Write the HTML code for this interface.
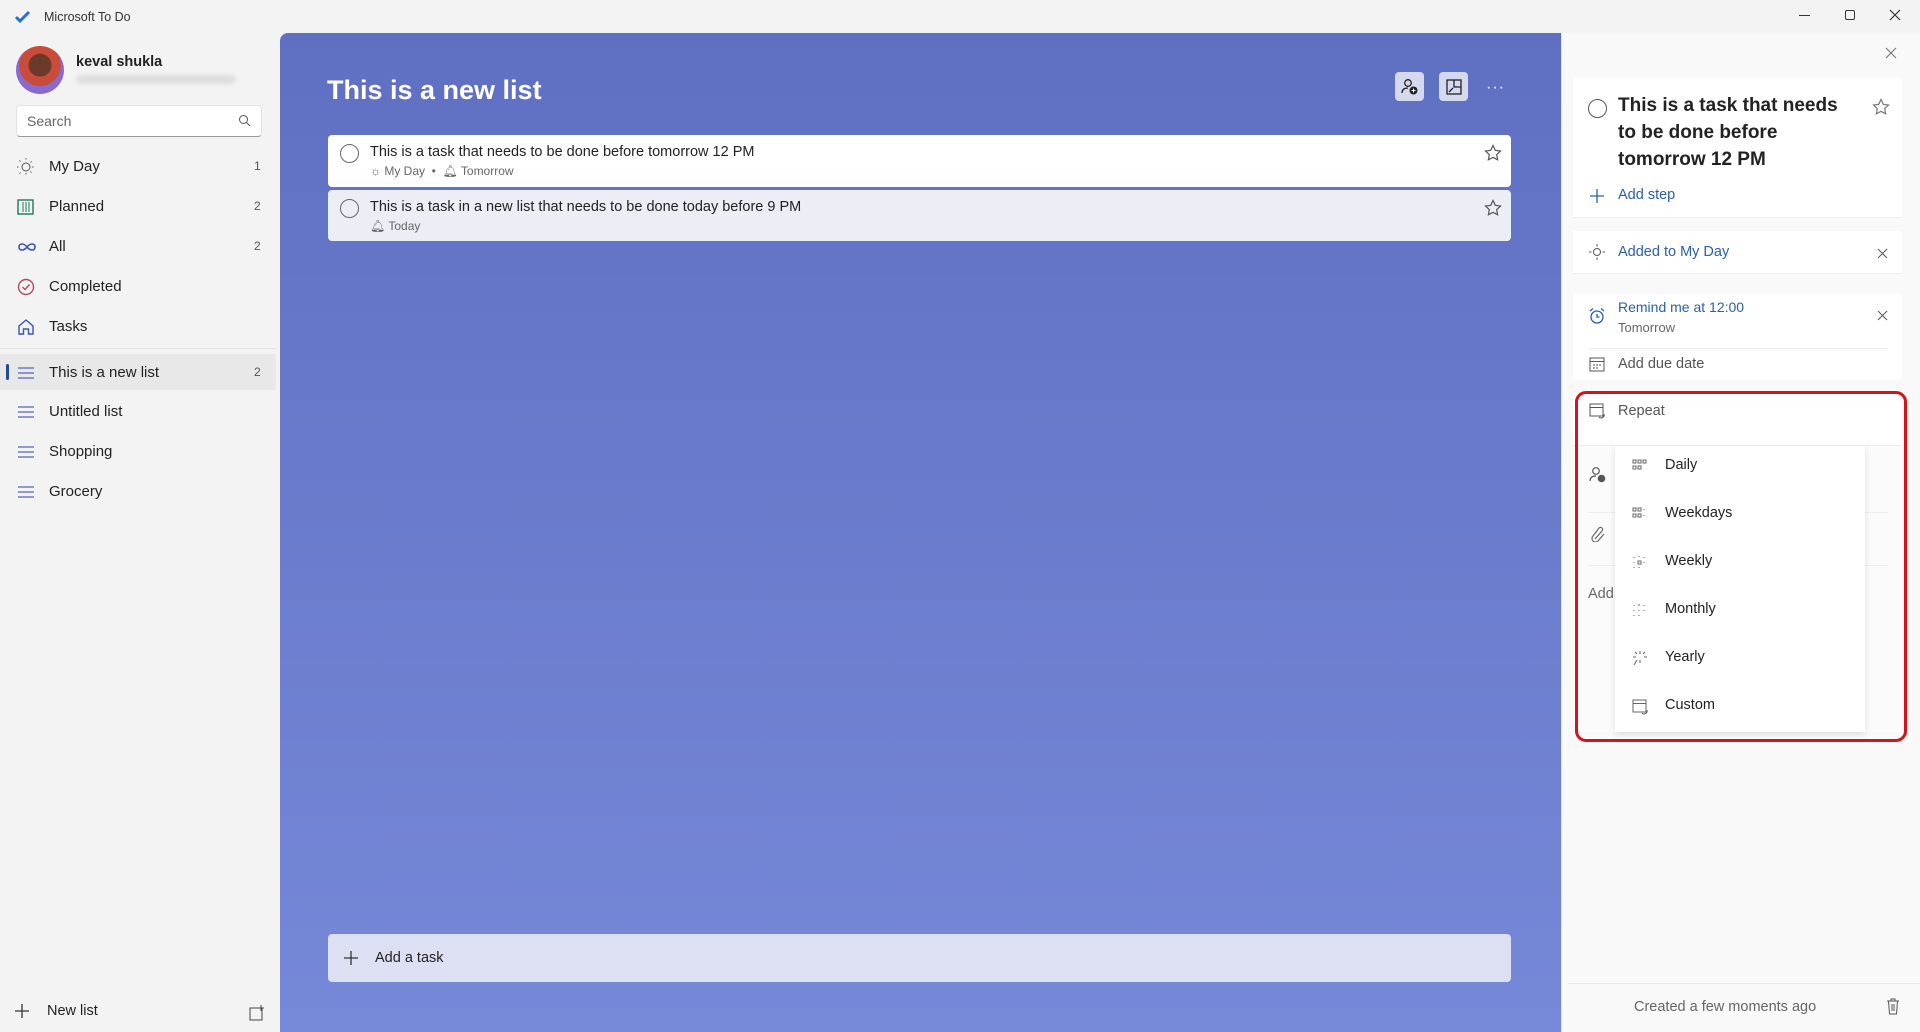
<!DOCTYPE html>
<html><head><meta charset="utf-8"><style>
*{box-sizing:border-box;margin:0;padding:0}
body{width:1920px;height:1032px;overflow:hidden;font-family:"Liberation Sans",sans-serif;background:#f3f3f3;position:relative;color:#222}
.abs{position:absolute}
.nav{position:absolute;left:0;width:276px;height:38px;font-size:15px;color:#222}
.nav .t{position:absolute;left:49px;top:10px}
.nav .c{position:absolute;left:254px;top:11px;font-size:12px;color:#555}
.nav svg{position:absolute;left:16px;top:9px}
.task{position:absolute;left:328px;width:1183px;border-radius:4px}
.task .circ{position:absolute;left:12px;width:19px;height:19px;border:1.6px solid #666;border-radius:50%}
.task .tt{position:absolute;left:42px;font-size:14.5px;color:#222}
.task .st{position:absolute;left:42px;font-size:12px;color:#666}
.rp{position:absolute;font-size:14.5px}
.mi{position:absolute;left:1665px;font-size:14.5px;color:#222}
.mic{position:absolute;left:1632px}
</style></head><body>
<svg class="abs" style="left:15px;top:10px" width="16" height="14" viewBox="0 0 16 14"><path d="M1 7l4 4 9-9" stroke="#2d6fd1" stroke-width="3" fill="none"/></svg>
<div class="abs" style="left:44px;top:10px;font-size:12.5px;color:#333">Microsoft To Do</div>
<div class="abs" style="left:1799px;top:15px;width:11px;height:1px;background:#333"></div>
<div class="abs" style="left:1845px;top:10px;width:10px;height:10px;border:1px solid #333;border-radius:2px"></div>
<svg class="abs" style="left:1889px;top:9px" width="12" height="12"><path d="M1 1l10 10M11 1L1 11" stroke="#333" stroke-width="1.2"/></svg>

<div class="abs" style="left:16px;top:46px;width:48px;height:48px;border-radius:50%;background:radial-gradient(circle at 50% 40%,#6b3a2a 0 30%,#c94b3a 31% 55%,#8a6ad0 56%)"></div>
<div class="abs" style="left:76px;top:54px;font-size:14.5px;font-weight:bold;color:#222">keval shukla</div>
<div class="abs" style="left:76px;top:75px;width:160px;height:9px;background:#ddd;border-radius:5px;filter:blur(2px)"></div>
<div class="abs" style="left:16px;top:105px;width:246px;height:32px;background:#fff;border:1px solid #e3e3e3;border-bottom:1px solid #999;border-radius:4px"></div>
<div class="abs" style="left:27px;top:113px;font-size:14px;color:#666">Search</div>
<svg class="abs" style="left:238px;top:114px" width="13" height="13"><circle cx="5.5" cy="5.5" r="4" stroke="#555" fill="none"/><path d="M8.5 8.5l3.5 3.5" stroke="#555"/></svg>

<div class="nav" style="top:148px"><svg width="20" height="20"><circle cx="10" cy="10" r="4" stroke="#555" fill="none"/><path d="M10 1v3M10 16v3M1 10h3M16 10h3M3.5 3.5l2 2M14.5 14.5l2 2M3.5 16.5l2-2M14.5 5.5l2-2" stroke="#555" stroke-dasharray="1.5 1.5"/></svg><span class="t">My Day</span><span class="c">1</span></div>
<div class="nav" style="top:188px"><svg width="20" height="20"><rect x="2" y="3" width="15" height="14" stroke="#1e7a5a" fill="none" stroke-width="1.4"/><path d="M7 5v10M10 5v10M13 5v10" stroke="#1e7a5a"/></svg><span class="t">Planned</span><span class="c">2</span></div>
<div class="nav" style="top:228px"><svg width="22" height="20"><path d="M11 10c-3-4-8-4-8 0s5 4 8 0 8-4 8 0-5 4-8 0" stroke="#3a54b8" fill="none" stroke-width="1.6"/></svg><span class="t">All</span><span class="c">2</span></div>
<div class="nav" style="top:268px"><svg width="20" height="20"><circle cx="10" cy="10" r="7.5" stroke="#b04a62" fill="none" stroke-width="1.4"/><path d="M6.5 10l2.5 2.5 4.5-5" stroke="#b04a62" fill="none" stroke-width="1.4"/></svg><span class="t">Completed</span></div>
<div class="nav" style="top:308px"><svg width="20" height="20"><path d="M3 9l7-6 7 6v8h-4.5v-5h-5v5H3z" stroke="#3a54b8" fill="none" stroke-width="1.4"/></svg><span class="t">Tasks</span></div>
<div class="abs" style="left:0;top:348px;width:276px;height:1px;background:#e3e3e3"></div>
<div class="nav" style="top:354px;background:#e8e8e8;height:36px"><div class="abs" style="left:6px;top:10px;width:3px;height:16px;border-radius:2px;background:#1d4d8f"></div><svg width="20" height="20"><path d="M2 5h16M2 10h16M2 15h16" stroke="#5566b8" stroke-width="1.3"/></svg><span class="t">This is a new list</span><span class="c">2</span></div>
<div class="nav" style="top:393px"><svg width="20" height="20"><path d="M2 5h16M2 10h16M2 15h16" stroke="#5566b8" stroke-width="1.3"/></svg><span class="t">Untitled list</span></div>
<div class="nav" style="top:433px"><svg width="20" height="20"><path d="M2 5h16M2 10h16M2 15h16" stroke="#5566b8" stroke-width="1.3"/></svg><span class="t">Shopping</span></div>
<div class="nav" style="top:473px"><svg width="20" height="20"><path d="M2 5h16M2 10h16M2 15h16" stroke="#5566b8" stroke-width="1.3"/></svg><span class="t">Grocery</span></div>
<svg class="abs" style="left:14px;top:1003px" width="16" height="16"><path d="M8 1v14M1 8h14" stroke="#333" stroke-width="1.3"/></svg>
<div class="abs" style="left:47px;top:1003px;font-size:14.5px">New list</div>
<svg class="abs" style="left:249px;top:1004px" width="17" height="17"><rect x="1" y="4" width="12" height="12" stroke="#444" fill="none"/><path d="M12 1v6M9 4h6" stroke="#444"/></svg>

<div class="abs" style="left:280px;top:33px;width:1281px;height:999px;border-radius:8px 0 0 0;background:linear-gradient(#5f6fc2,#7688d8)"></div>
<div class="abs" style="left:327px;top:75px;font-size:27px;font-weight:bold;color:#fff">This is a new list</div>
<div class="abs" style="left:1395px;top:72px;width:29px;height:29px;border-radius:4px;background:#d4d9f0"></div>
<svg class="abs" style="left:1401px;top:78px" width="18" height="18"><circle cx="7" cy="5" r="3.3" stroke="#222" fill="none" stroke-width="1.3"/><path d="M1 15c0-4 3-5 6-5" stroke="#222" fill="none" stroke-width="1.3"/><circle cx="12.5" cy="12.5" r="4" fill="#222"/><path d="M12.5 10.5v4M10.5 12.5h4" stroke="#fff"/></svg>
<div class="abs" style="left:1439px;top:72px;width:29px;height:29px;border-radius:4px;background:#d4d9f0"></div>
<svg class="abs" style="left:1446px;top:79px" width="16" height="16"><rect x="1" y="1" width="14" height="14" stroke="#222" fill="none" stroke-width="1.3"/><path d="M8 1v7h7M3 13l4-4" stroke="#222" stroke-width="1.3" fill="none"/></svg>
<div class="abs" style="left:1486px;top:79px;color:#fff;font-size:16px;letter-spacing:1px">···</div>

<div class="task" style="top:135px;height:52px;background:#fff">
<div class="circ" style="top:9px"></div><div class="tt" style="top:9px">This is a task that needs to be done before tomorrow 12 PM</div>
<div class="st" style="top:29px">☼ My Day &nbsp;•&nbsp; 🔔︎ Tomorrow</div>
<svg class="abs" style="left:1156px;top:9px" width="18" height="18"><path d="M9 1.5l2.3 4.8 5.2.7-3.8 3.6.9 5.2L9 13.3l-4.6 2.5.9-5.2L1.5 7l5.2-.7z" stroke="#555" fill="none" stroke-width="1.2"/></svg></div>
<div class="task" style="top:190px;height:51px;background:#ecedf5">
<div class="circ" style="top:9px"></div><div class="tt" style="top:9px">This is a task in a new list that needs to be done today before 9 PM</div>
<div class="st" style="top:29px">🔔︎ Today</div>
<svg class="abs" style="left:1156px;top:9px" width="18" height="18"><path d="M9 1.5l2.3 4.8 5.2.7-3.8 3.6.9 5.2L9 13.3l-4.6 2.5.9-5.2L1.5 7l5.2-.7z" stroke="#555" fill="none" stroke-width="1.2"/></svg></div>

<div class="abs" style="left:328px;top:934px;width:1183px;height:48px;border-radius:4px;background:#dde0f3"></div>
<svg class="abs" style="left:343px;top:950px" width="16" height="16"><path d="M8 1v14M1 8h14" stroke="#333" stroke-width="1.3"/></svg>
<div class="abs" style="left:375px;top:950px;font-size:14.5px">Add a task</div>

<div class="abs" style="left:1561px;top:33px;width:359px;height:999px;background:#f9f9f9;border-left:1px solid #e5e5e5"></div>
<svg class="abs" style="left:1885px;top:47px" width="12" height="12"><path d="M1 1l10 10M11 1L1 11" stroke="#777" stroke-width="1.1"/></svg>
<div class="abs" style="left:1573px;top:78px;width:329px;height:140px;background:#fff;border-bottom:1px solid #eee"></div>
<div class="abs" style="left:1588px;top:99px;width:19px;height:19px;border:1.6px solid #555;border-radius:50%"></div>
<div class="abs" style="left:1618px;top:92px;font-size:19px;font-weight:bold;line-height:27px;color:#222;width:240px">This is a task that needs to be done before tomorrow 12 PM</div>
<svg class="abs" style="left:1872px;top:98px" width="18" height="18"><path d="M9 1.5l2.3 4.8 5.2.7-3.8 3.6.9 5.2L9 13.3l-4.6 2.5.9-5.2L1.5 7l5.2-.7z" stroke="#777" fill="none" stroke-width="1.2"/></svg>
<svg class="abs" style="left:1590px;top:189px" width="14" height="14"><path d="M7 0v14M0 7h14" stroke="#2b5fa8" stroke-width="1.3"/></svg>
<div class="rp" style="left:1618px;top:187px;color:#2b5fa8">Add step</div>

<div class="abs" style="left:1573px;top:231px;width:329px;height:43px;background:#fff;border-bottom:1px solid #eee"></div>
<svg class="abs" style="left:1588px;top:243px" width="18" height="18"><circle cx="9" cy="9" r="3.5" stroke="#555" fill="none"/><path d="M9 1v2.5M9 14.5V17M1 9h2.5M14.5 9H17" stroke="#555"/></svg>
<div class="rp" style="left:1618px;top:244px;color:#2b5fa8">Added to My Day</div>
<svg class="abs" style="left:1877px;top:248px" width="11" height="11"><path d="M1 1l9 9M10 1L1 10" stroke="#555"/></svg>

<div class="abs" style="left:1573px;top:294px;width:329px;height:86px;background:#fff"></div>
<div class="abs" style="left:1588px;top:348px;width:300px;height:1px;background:#eee"></div>
<svg class="abs" style="left:1588px;top:307px" width="18" height="18"><circle cx="9" cy="10" r="6" stroke="#2b5fa8" fill="none" stroke-width="1.3"/><path d="M9 7v3h2.5M2 4l3-2.5M16 4l-3-2.5" stroke="#2b5fa8" fill="none" stroke-width="1.3"/></svg>
<div class="rp" style="left:1618px;top:299px;color:#2b5fa8;font-size:14px">Remind me at 12:00</div>
<div class="rp" style="left:1618px;top:320px;color:#666;font-size:13px">Tomorrow</div>
<svg class="abs" style="left:1877px;top:310px" width="11" height="11"><path d="M1 1l9 9M10 1L1 10" stroke="#555"/></svg>
<svg class="abs" style="left:1589px;top:357px" width="16" height="15"><rect x="1" y="1" width="14" height="13" stroke="#555" fill="none"/><path d="M1 4.5h14M4 8h2M7 8h2M10 8h2M4 11h2M7 11h2" stroke="#555"/></svg>
<div class="rp" style="left:1618px;top:356px;color:#555">Add due date</div>

<div class="abs" style="left:1573px;top:392px;width:329px;height:54px;background:#fff;border-bottom:1px solid #eee"></div>
<svg class="abs" style="left:1589px;top:403px" width="17" height="16"><rect x="1" y="1" width="13" height="12" stroke="#555" fill="none"/><path d="M1 4.5h13M10 14a3 3 0 0 0 5-3" stroke="#555" fill="none"/></svg>
<div class="rp" style="left:1618px;top:403px;color:#555">Repeat</div>
<div class="abs" style="left:1573px;top:446px;width:329px;height:286px;background:#fbfbfb"></div>
<div class="abs" style="left:1588px;top:512px;width:300px;height:1px;background:#eee"></div>
<div class="abs" style="left:1588px;top:565px;width:300px;height:1px;background:#eee"></div>
<svg class="abs" style="left:1589px;top:466px" width="18" height="18"><circle cx="7" cy="5" r="3.3" stroke="#555" fill="none" stroke-width="1.2"/><path d="M1 15c0-4 3-5 6-5" stroke="#555" fill="none" stroke-width="1.2"/><circle cx="12.5" cy="12.5" r="3.8" fill="#555"/></svg>
<svg class="abs" style="left:1591px;top:526px" width="14" height="16"><path d="M4 13l7-8a2 2 0 0 0-3-3L2 10a3.5 3.5 0 0 0 5 5l6-7" stroke="#666" fill="none" stroke-width="1.2"/></svg>
<div class="rp" style="left:1588px;top:586px;color:#666">Add</div>

<div class="abs" style="left:1615px;top:446px;width:250px;height:286px;background:#fff;box-shadow:0 2px 6px rgba(0,0,0,.12)"></div>
<svg class="mic" style="top:459px" width="18" height="14"><g fill="none" stroke="#666"><rect x="1" y="1" width="3" height="3"/><rect x="6" y="1" width="3" height="3"/><rect x="11" y="1" width="3" height="3"/><rect x="1" y="7" width="3" height="3"/><rect x="6" y="7" width="3" height="3"/></g></svg>
<div class="mi" style="top:457px">Daily</div>
<svg class="mic" style="top:507px" width="18" height="14"><g fill="none" stroke="#666"><rect x="1" y="1" width="3" height="3"/><rect x="6" y="1" width="3" height="3"/><rect x="1" y="7" width="3" height="3"/><rect x="6" y="7" width="3" height="3"/></g><path d="M12 2v1M12 8v1" stroke="#666"/></svg>
<div class="mi" style="top:505px">Weekdays</div>
<svg class="mic" style="top:555px" width="18" height="16"><rect x="6" y="6" width="3" height="3" fill="none" stroke="#666"/><path d="M2 2v1M2 7v1M2 12v1M7 1v1M12 2v1M12 7v1M7 12v1" stroke="#666"/></svg>
<div class="mi" style="top:553px">Weekly</div>
<svg class="mic" style="top:603px" width="18" height="16"><path d="M2 2v1M2 7v1M2 12v1M7 1v2M12 2v1M12 7v1M7 12v1M7 7v1" stroke="#666"/></svg>
<div class="mi" style="top:601px">Monthly</div>
<svg class="mic" style="top:650px" width="18" height="16"><path d="M8 1v3M8 10v3M1 7h3M12 7h3M3 2l2 2M13 2l-2 2M5 10l-3 5" stroke="#666"/></svg>
<div class="mi" style="top:649px">Yearly</div>
<svg class="mic" style="top:698px" width="18" height="17"><rect x="1" y="2" width="13" height="12" stroke="#666" fill="none"/><path d="M1 5.5h13M10 15a3 3 0 0 0 5-3" stroke="#666" fill="none"/></svg>
<div class="mi" style="top:697px">Custom</div>

<div class="abs" style="left:1575px;top:391px;width:332px;height:351px;border:3.5px solid #d3141b;border-radius:11px"></div>

<div class="abs" style="left:1568px;top:983px;width:352px;height:1px;background:#e8e8e8"></div>
<div class="abs" style="left:1634px;top:999px;font-size:14.5px;color:#666">Created a few moments ago</div>
<svg class="abs" style="left:1886px;top:998px" width="14" height="17"><path d="M1 3h12M5 3V1h4v2M2.5 3l1 13h7l1-13M6 6v7M8 6v7" stroke="#555" fill="none"/></svg>
</body></html>
